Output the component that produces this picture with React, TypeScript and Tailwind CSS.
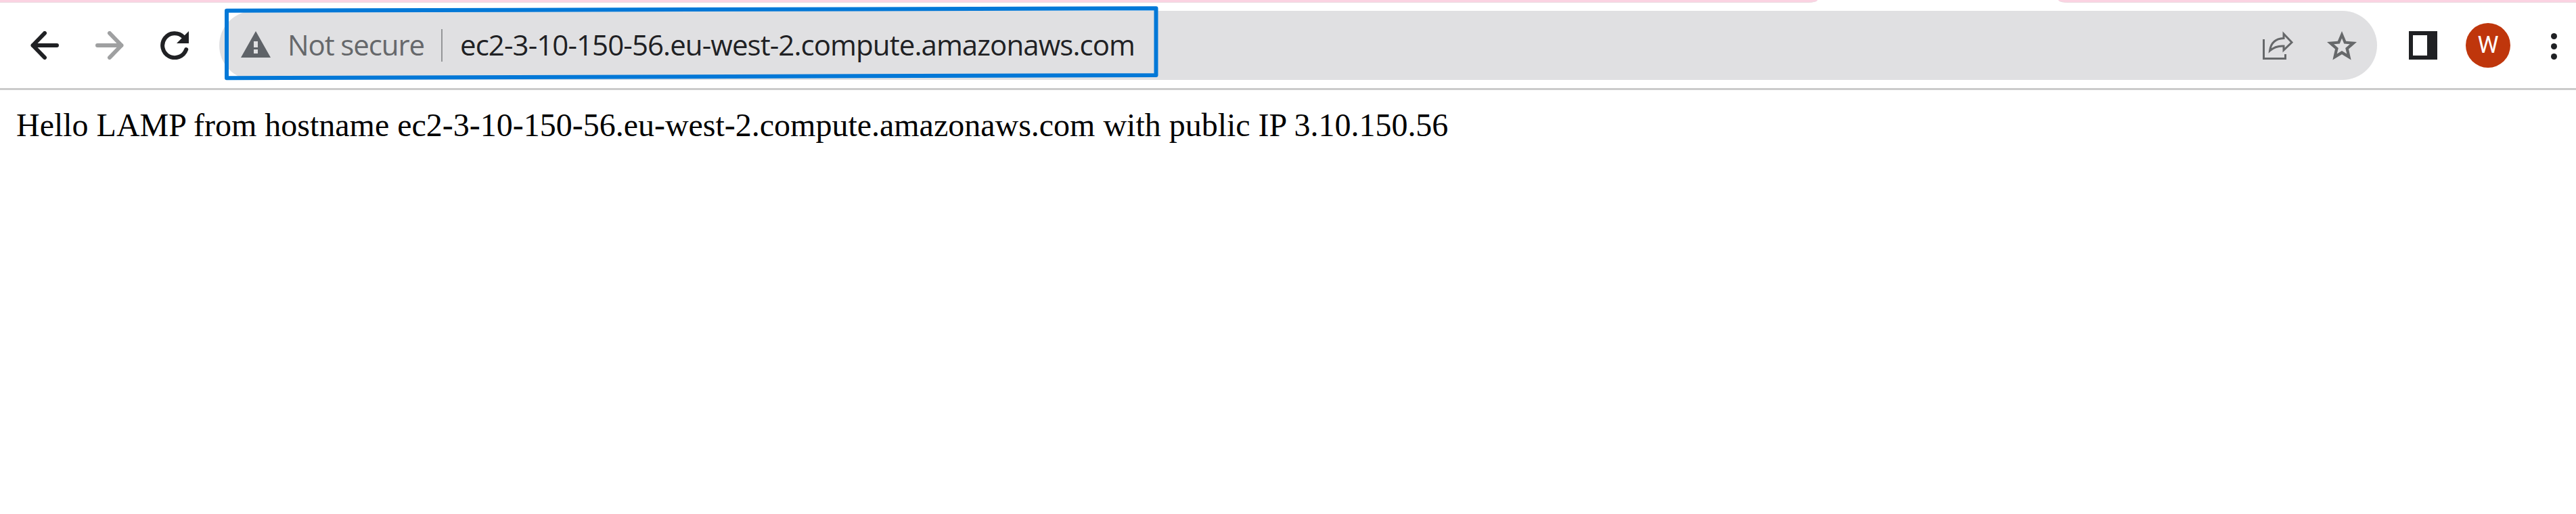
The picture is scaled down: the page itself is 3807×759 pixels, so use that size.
const URL_TEXT = "ec2-3-10-150-56.eu-west-2.compute.amazonaws.com";

function TabStrip() {
  return (
    <div className="flex h-1 shrink-0 justify-between">
      <div className="h-1 w-[2686px] rounded-br-[14px_4px] border-b border-[#ead9e0] bg-[#fbd3e2]" />
      <div className="h-1 w-[765px] rounded-bl-[14px_4px] border-b border-[#ead9e0] bg-[#fbd3e2]" />
    </div>
  );
}

function BackIcon() {
  return (
    <svg className="size-[42px]" viewBox="0 0 42 42" fill="none" stroke="#202124" strokeWidth="6" strokeLinecap="round" strokeLinejoin="round">
      <path d="M39 21H3.5M21 3L3.5 21L21 39" />
    </svg>
  );
}

function ForwardIcon() {
  return (
    <svg className="size-[42px]" viewBox="0 0 42 42" fill="none" stroke="#9fa0a1" strokeWidth="6" strokeLinecap="round" strokeLinejoin="round">
      <path d="M3 21H38.5M21 3L38.5 21L21 39" />
    </svg>
  );
}

function ReloadIcon() {
  return (
    <svg className="size-[42px]" viewBox="0 0 42 42" fill="none">
      <path d="M38.2 27A18 18 0 1 1 34 8.5" stroke="#202124" strokeWidth="6" strokeLinecap="round" />
      <path d="M42 0V18H24Z" fill="#202124" />
    </svg>
  );
}

function WarningIcon() {
  return (
    <svg className="mb-[3px] h-[39px] w-[44px]" viewBox="0 0 44 39">
      <path fillRule="evenodd" d="M22 0L44 39H0ZM19 15V24H25V15ZM19 27V33H25V27Z" fill="#5f6368" />
    </svg>
  );
}

function ShareIcon() {
  return (
    <svg className="h-[42px] w-[45px]" viewBox="0 0 45 42" fill="none" stroke="#66686a" strokeWidth="3">
      <path d="M1.5 12V40.5H33.5V34" />
      <path d="M31 4L43 16.5L31 28V22C22 21.500 16 24 10.500 29C12 17 19 11 31 10.500Z" />
    </svg>
  );
}

function StarIcon() {
  return (
    <svg className="h-[43px] w-[44px]" viewBox="0 0 44 43">
      <path fillRule="evenodd" fill="#66686a" d="M22 0L28.200 14.700L44 16L32 26.500L35.600 42.500L22 34.200L8.400 42.500L12 26.500L0 16L15.800 14.700ZM22 10.500L18.800 18.500L10.200 19.200L16.800 25L14.700 33.500L22 29L29.300 33.500L27.200 25L33.800 19.200L25.200 18.500Z" />
    </svg>
  );
}

function Toolbar() {
  return (
    <div className="relative flex h-[126px] shrink-0 items-center pl-[45px]">
      <div className="flex w-[279px] gap-[54px]">
        <BackIcon />
        <ForwardIcon />
        <ReloadIcon />
      </div>
      <div className="flex h-[102px] w-[3189px] items-center rounded-full bg-[#e0e0e2] pr-[30px] pl-[32px] font-['Open_Sans',sans-serif] text-[42px] whitespace-nowrap">
        <WarningIcon />
        <span className="mb-[3px] ml-[25px] w-[227px] tracking-[-1.1px] text-[#66686b]">Not secure</span>
        <span className="h-12 w-0.5 bg-[#949698]" />
        <span className="mb-[3px] ml-[26px] tracking-[-0.92px] text-[#202124]">{URL_TEXT}</span>
        <span className="ml-auto flex gap-[50px]">
          <ShareIcon />
          <StarIcon />
        </span>
      </div>
      <div className="ml-[47px] flex items-center">
        <svg className="size-[42px]" viewBox="0 0 42 42">
          <path fillRule="evenodd" d="M0 0H42V42H0ZM6 6V36H27V6Z" fill="#202124" />
        </svg>
        <span className="ml-[42px] flex size-[66px] items-center justify-center rounded-full bg-[#bf360c] font-[Roboto,sans-serif] text-[35px] text-white">W</span>
        <svg className="mt-[3px] ml-[60px] h-[39px] w-[9px]" viewBox="0 0 9 39" fill="#202124">
          <circle cx="4.5" cy="4.5" r="4.5" />
          <circle cx="4.5" cy="19.5" r="4.5" />
          <circle cx="4.5" cy="34.5" r="4.5" />
        </svg>
      </div>
      <svg className="absolute top-0 left-[320px] h-[120px] w-[1400px]" viewBox="0 4 1400 120" fill="none" stroke="#0378d7" strokeWidth="6" strokeLinejoin="round">
        <path d="M15 15.700L1388.500 12.300V111L15 115.300Z" />
      </svg>
    </div>
  );
}

export default function App() {
  return (
    <div className="flex h-[759px] w-[3807px] flex-col overflow-hidden bg-white">
      <TabStrip />
      <Toolbar />
      <div className="h-[3px] shrink-0 bg-[#cbcbcb]" />
      <main className="px-6 pt-[24px] font-['Liberation_Serif',serif] text-[48px] leading-[55px] tracking-[-0.01px] text-black">
        Hello LAMP from hostname {URL_TEXT} with public IP 3.10.150.56
      </main>
    </div>
  );
}
